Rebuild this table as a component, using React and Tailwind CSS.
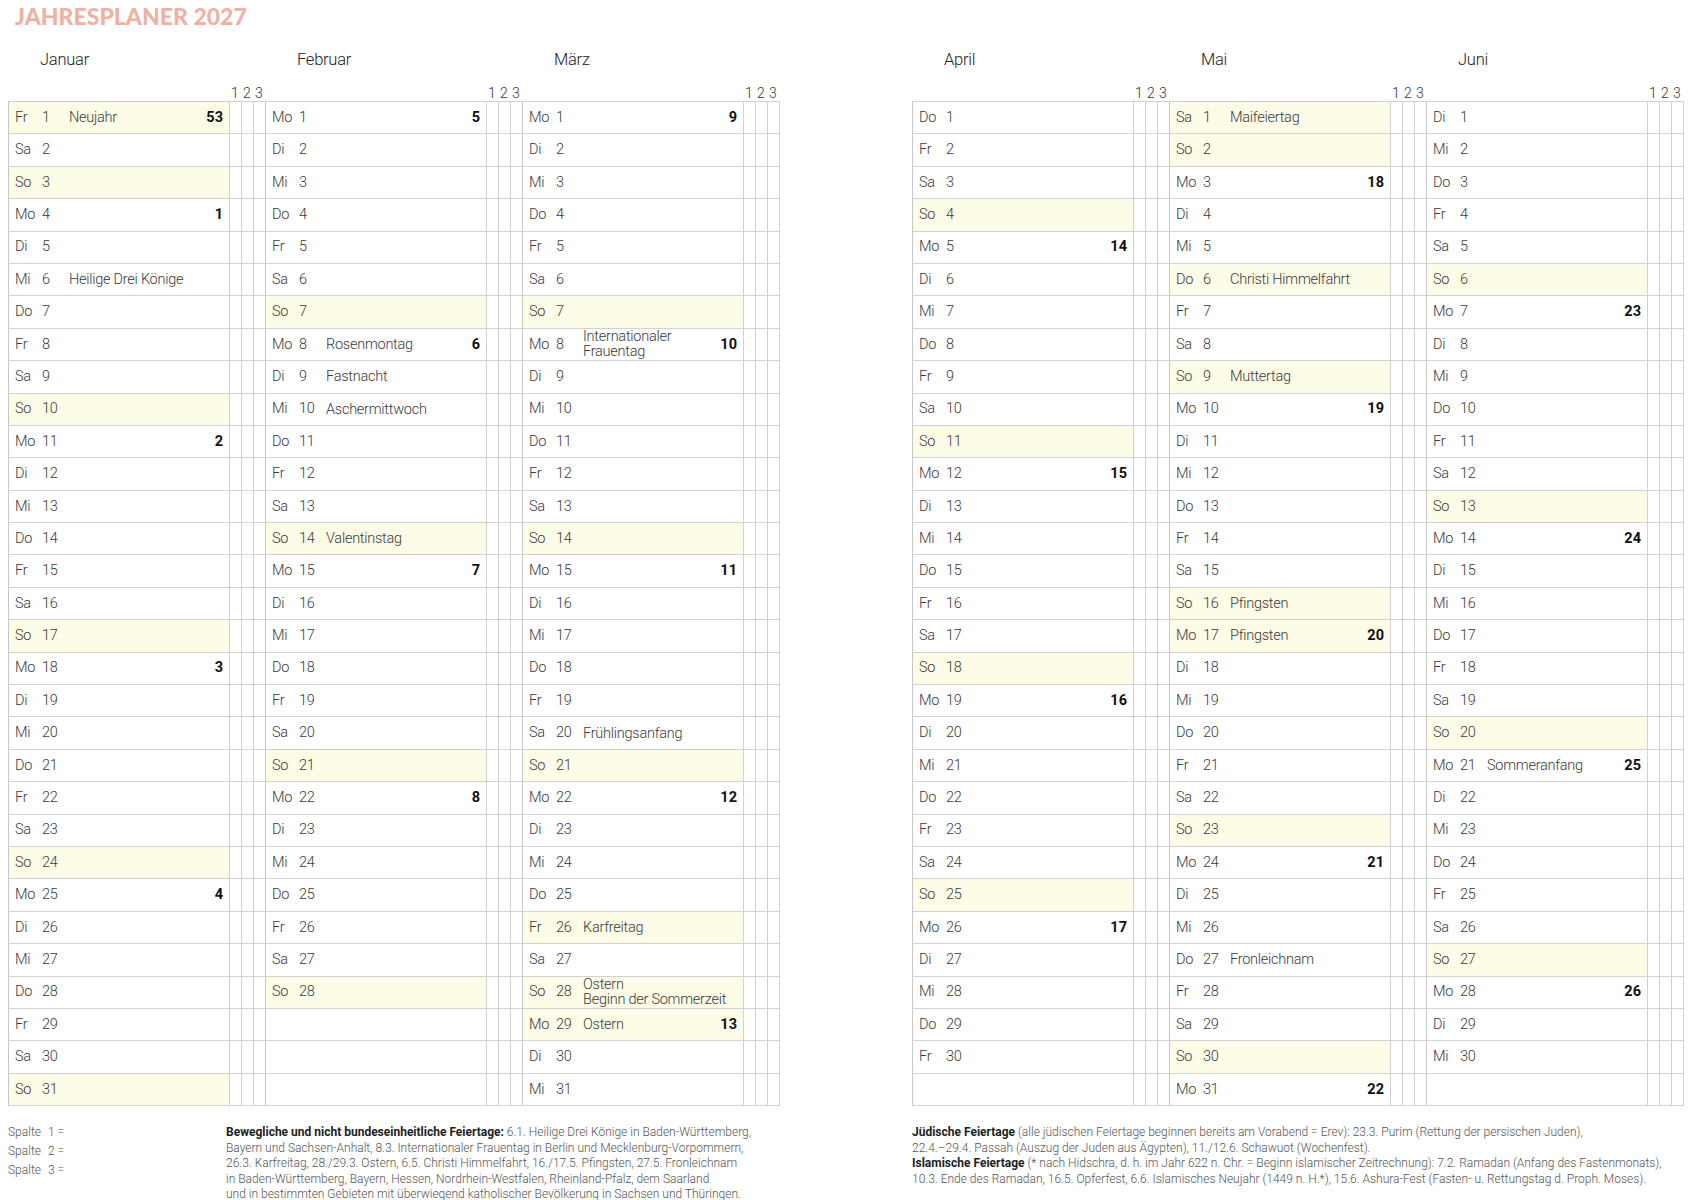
import React from "react";

const DAYS = ["So", "Mo", "Di", "Mi", "Do", "Fr", "Sa"];

// holidays: text + whether the cell is tinted
const HOLIDAYS = {
  "0-1": { text: "Neujahr", fill: true },
  "0-6": { text: "Heilige Drei Könige" },
  "1-8": { text: "Rosenmontag" },
  "1-9": { text: "Fastnacht" },
  "1-10": { text: "Aschermittwoch" },
  "1-14": { text: "Valentinstag" },
  "2-8": { text: "Internationaler\nFrauentag" },
  "2-20": { text: "Frühlingsanfang" },
  "2-26": { text: "Karfreitag", fill: true },
  "2-28": { text: "Ostern\nBeginn der Sommerzeit" },
  "2-29": { text: "Ostern", fill: true },
  "4-1": { text: "Maifeiertag", fill: true },
  "4-6": { text: "Christi Himmelfahrt", fill: true },
  "4-9": { text: "Muttertag" },
  "4-16": { text: "Pfingsten" },
  "4-17": { text: "Pfingsten", fill: true },
  "4-27": { text: "Fronleichnam" },
  "5-21": { text: "Sommeranfang" },
};

const MONTHS = ["Januar", "Februar", "März", "April", "Mai", "Juni"];

const isoWeek = (date) => {
  const d = new Date(Date.UTC(date.getFullYear(), date.getMonth(), date.getDate()));
  const day = d.getUTCDay() || 7;
  d.setUTCDate(d.getUTCDate() + 4 - day);
  const yearStart = new Date(Date.UTC(d.getUTCFullYear(), 0, 1));
  return Math.ceil(((d - yearStart) / 86400000 + 1) / 7);
};

const Row = ({ month, day }) => {
  const daysInMonth = new Date(2027, month + 1, 0).getDate();
  if (day > daysInMonth) {
    return (
      <div className="flex h-[32.4px] border-b border-[#d2d2d2]">
        <div className="w-[221px] border-l border-[#c6c6c6]"></div>
        <div className="w-[12px] border-l border-[#d2d2d2]"></div>
        <div className="w-[12px] border-l border-[#d2d2d2]"></div>
        <div className="w-[12px] border-l border-[#d2d2d2]"></div>
      </div>
    );
  }

  const date = new Date(2027, month, day);
  const wd = date.getDay();
  const hol = HOLIDAYS[`${month}-${day}`];
  const fill = wd === 0 || (hol && hol.fill);
  let week = wd === 1 ? isoWeek(date) : null;
  if (month === 0 && day === 1) week = 53;

  return (
    <div className="flex h-[32.4px] border-b border-[#d2d2d2]">
      <div
        className={`flex items-center w-[221px] border-l border-[#c6c6c6] pl-[6px] pr-[6px] ${
          fill ? "bg-[#fdfce7]" : ""
        }`}
      >
        <span className="w-[27px]">{DAYS[wd]}</span>
        <span className="w-[27px]">{day}</span>
        <span className="flex-1 whitespace-pre-line leading-[15px]">
          {hol ? hol.text : ""}
        </span>
        <span className="font-bold text-[#111] tracking-normal">{week}</span>
      </div>
      <div className="w-[12px] border-l border-[#d2d2d2]"></div>
      <div className="w-[12px] border-l border-[#d2d2d2]"></div>
      <div className="w-[12px] border-l border-[#d2d2d2]"></div>
    </div>
  );
};

const Month = ({ month, last }) => {
  const rows = [];
  for (let i = 1; i <= 31; i++) {
    rows.push(<Row key={i} month={month} day={i} />);
  }

  return (
    <div className="w-[257px]">
      <div className="h-[28px] pl-[32px] text-[16.5px] leading-[28px] text-[#222]">
        {MONTHS[month]}
      </div>
      <div className="flex items-end h-[27px] text-[14px] text-[#333] tracking-normal">
        <div className="w-[221px]"></div>
        <span className="w-[12px] text-center leading-[16px]">1</span>
        <span className="w-[12px] text-center leading-[16px]">2</span>
        <span className="w-[12px] text-center leading-[16px]">3</span>
      </div>
      <div
        className={`border-t border-[#d2d2d2] ${last ? "border-r w-[258px]" : ""}`}
      >
        {rows}
      </div>
    </div>
  );
};

export default function App() {
  return (
    <div
      className="w-[1688px] h-[1200px] bg-white text-[#3a3a3a] font-light text-[14.5px] tracking-[-0.25px] overflow-hidden"
      style={{ fontFamily: "Roboto, 'Liberation Sans', sans-serif" }}
    >
      <div
        className="h-[46px] pl-[15px] pt-[3px] text-[23px] leading-[27px] font-black tracking-normal text-[#efb2a2]"
        style={{ fontFamily: "Lato, 'Liberation Sans', sans-serif" }}
      >
        JAHRESPLANER 2027
      </div>

      <div className="flex pl-[8px]">
        <div className="flex w-[904px]">
          <Month month={0} />
          <Month month={1} />
          <Month month={2} last />
        </div>
        <div className="flex">
          <Month month={3} />
          <Month month={4} />
          <Month month={5} last />
        </div>
      </div>

      <div className="flex pl-[8px] text-[12px] text-[#555] tracking-normal">
        <div className="flex w-[904px]">
          <div className="w-[218px] pt-[17px] leading-[19px]">
            <div>
              Spalte <span className="ml-[4px]">1 =</span>
            </div>
            <div>
              Spalte <span className="ml-[4px]">2 =</span>
            </div>
            <div>
              Spalte <span className="ml-[4px]">3 =</span>
            </div>
          </div>
          <p className="pt-[19px] leading-[15.5px] whitespace-nowrap">
            <span className="font-bold text-[#222]">
              Bewegliche und nicht bundeseinheitliche Feiertage:
            </span>{" "}
            6.1. Heilige Drei Könige in Baden-Württemberg,
            <br />
            Bayern und Sachsen-Anhalt, 8.3. Internationaler Frauentag in Berlin und Mecklenburg-Vorpommern,
            <br />
            26.3. Karfreitag, 28./29.3. Ostern, 6.5. Christi Himmelfahrt, 16./17.5. Pfingsten, 27.5. Fronleichnam
            <br />
            in Baden-Württemberg, Bayern, Hessen, Nordrhein-Westfalen, Rheinland-Pfalz, dem Saarland
            <br />
            und in bestimmten Gebieten mit überwiegend katholischer Bevölkerung in Sachsen und Thüringen.
          </p>
        </div>
        <div className="pt-[19px] leading-[15.5px] whitespace-nowrap">
          <p>
            <span className="font-bold text-[#222]">Jüdische Feiertage</span> (alle jüdischen
            Feiertage beginnen bereits am Vorabend = Erev): 23.3. Purim (Rettung der persischen
            Juden),
            <br />
            22.4.–29.4. Passah (Auszug der Juden aus Ägypten), 11./12.6. Schawuot (Wochenfest).
          </p>
          <p>
            <span className="font-bold text-[#222]">Islamische Feiertage</span> (* nach Hidschra,
            d. h. im Jahr 622 n. Chr. = Beginn islamischer Zeitrechnung): 7.2. Ramadan (Anfang des
            Fastenmonats),
            <br />
            10.3. Ende des Ramadan, 16.5. Opferfest, 6.6. Islamisches Neujahr (1449 n. H.*), 15.6.
            Ashura-Fest (Fasten- u. Rettungstag d. Proph. Moses).
          </p>
        </div>
      </div>
    </div>
  );
}
